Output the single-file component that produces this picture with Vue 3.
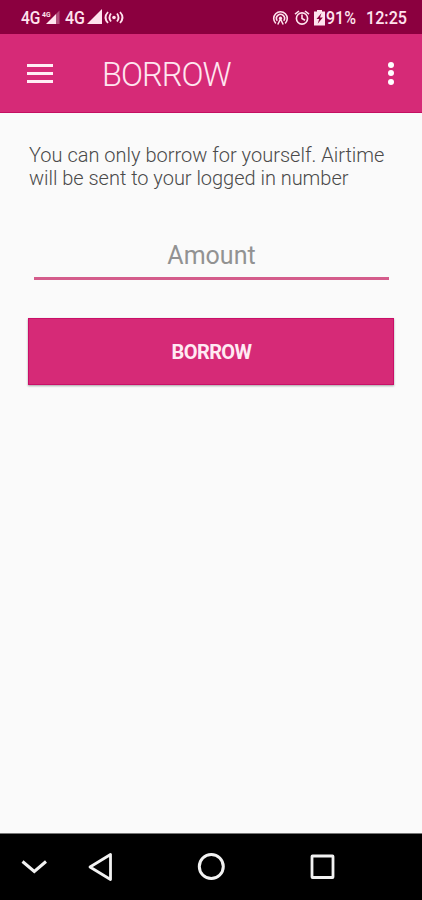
<script setup>
import { ref } from 'vue'

const amount = ref('')
</script>

<template>
  <div class="screen">
    <header class="status">
      <div class="group left">
        <svg width="104" height="34" viewBox="0 0 104 34" fill="#ffe3ee">
          <text x="0" y="24" font-size="18" font-weight="500" textLength="19.500" lengthAdjust="spacingAndGlyphs">4G</text>
          <text x="21" y="16.500" font-size="8" font-weight="700" textLength="8.500" lengthAdjust="spacingAndGlyphs">4G</text>
          <path d="M25 24L35 14V24Z" />
          <path d="M35 14L38.500 10.500V24H35Z" opacity=".35" />
          <text x="44" y="24" font-size="18" font-weight="500" textLength="20" lengthAdjust="spacingAndGlyphs">4G</text>
          <path d="M66 24L81 9V24Z" />
          <circle cx="93" cy="17.500" r="1.800" />
          <g fill="none" stroke="#ffe3ee" stroke-width="1.800">
            <path d="M90 13.500Q87 17.500 90 21.500M96 13.500Q99 17.500 96 21.500M87 12Q82 17.500 87 23M99 12Q104 17.500 99 23" />
          </g>
        </svg>
      </div>
      <div class="group right">
        <svg width="54" height="34" viewBox="0 0 54 34" fill="none" stroke="#ffe3ee" stroke-width="1.600">
          <path d="M4.800 23.400A6.800 6.800 0 1 1 14.200 23.400M6.300 20.800A4 4 0 1 1 12.700 20.800" />
          <path d="M6.800 24.500L9.500 19L12.200 24.500" />
          <circle cx="9.500" cy="18.200" r="1.600" fill="#ffe3ee" stroke="none" />
          <circle cx="31" cy="18.500" r="5.600" />
          <path d="M31 14.500V18.500L34 20.200M24 14.200L28 11M38 14.200L34 11" />
          <path d="M43 11.500H46V10H51V11.500H54V25.500H43Z" fill="#ffe3ee" stroke="none" />
          <path d="M50.500 13L45.500 19H48.200L46.700 23.800L51.800 17.600H49Z" fill="#8b003f" stroke="none" />
        </svg>
        <svg class="battery" width="31" height="34" viewBox="0 0 31 34" fill="#ffe3ee">
          <text x="1" y="24" font-size="17.500" font-weight="500" textLength="30" lengthAdjust="spacingAndGlyphs">91%</text>
        </svg>
        <svg class="clock" width="42" height="34" viewBox="0 0 42 34" fill="#ffe3ee">
          <text x="1" y="24" font-size="18" font-weight="500" textLength="41" lengthAdjust="spacingAndGlyphs">12:25</text>
        </svg>
      </div>
    </header>

    <nav class="appbar">
      <div class="menu"><i></i><i></i><i></i></div>
      <h1>BORROW</h1>
      <div class="more"><i></i><i></i><i></i></div>
    </nav>

    <main>
      <p>You can only borrow for yourself. Airtime<br><span class="second">will be sent to your logged in number</span></p>
      <input v-model="amount" placeholder="Amount">
      <button>BORROW</button>
    </main>

    <footer>
      <svg width="422" height="66" viewBox="0 0 422 66" fill="none" stroke="#f2f2f2" stroke-width="3">
        <path d="M22.500 27.500L34.300 37.500L46 27.500" />
        <path d="M90 33L110.500 20.500V45.500Z" stroke-width="2.800" stroke-linejoin="round" />
        <circle cx="211.300" cy="32.500" r="12" />
        <rect x="312" y="22" width="21" height="21.500" rx=".5" stroke-width="2.800" />
      </svg>
    </footer>
  </div>
</template>

<style>
body {
  margin: 0;
  background: #fafafa;
}
</style>

<style scoped>
.screen {
  width: 422px;
  height: 900px;
  display: flex;
  flex-direction: column;
  background: #fafafa;
  font-family: Roboto, "Liberation Sans", sans-serif;
  overflow: hidden;
}
svg {
  display: block;
  overflow: visible;
}
.status {
  height: 34px;
  box-sizing: border-box;
  padding: 0 15px 0 21px;
  display: flex;
  justify-content: space-between;
  background: #8b003f;
}
.group {
  display: flex;
}
.clock {
  margin-left: 9px;
}
.appbar {
  height: 79px;
  box-sizing: border-box;
  padding: 0 28px 0 27px;
  display: flex;
  align-items: center;
  background: #d62a77;
  border-bottom: 1px solid #c40f62;
}
.menu {
  width: 26px;
  display: flex;
  flex-direction: column;
  gap: 5px;
}
.menu i {
  height: 3px;
  background: #ffeef5;
}
h1 {
  margin: 4px 0 0 49px;
  color: #ffe6f0;
  font-size: 32.500px;
  font-weight: 300;
  line-height: 38px;
  letter-spacing: -0.950px;
}
.more {
  margin-left: auto;
  display: flex;
  flex-direction: column;
  gap: 2.500px;
}
.more i {
  width: 6px;
  height: 6px;
  border-radius: 50%;
  background: #fff;
}
main {
  flex: 1;
  padding: 31px 28px 0;
  display: flex;
  flex-direction: column;
}
p {
  margin: 0 0 0 1px;
  color: #4a4a4a;
  font-size: 20px;
  font-weight: 300;
  line-height: 23px;
  white-space: nowrap;
}
.second {
  letter-spacing: -0.030px;
}
input {
  margin: 44px 5px 0 6px;
  height: 46px;
  box-sizing: border-box;
  padding: 0;
  border: 0;
  border-bottom: 3px solid #d45c8b;
  border-radius: 0;
  outline: 0;
  background: transparent;
  color: #555;
  font: 400 25px/32px Roboto, "Liberation Sans", sans-serif;
  text-align: center;
}
input::placeholder {
  color: #929292;
  opacity: 1;
}
button {
  height: 67px;
  margin: 38px 0 0;
  padding: 1px 0 0 1px;
  border: 1px solid #c90f68;
  border-radius: 0;
  background: #d62a77;
  box-shadow: 0 1px 2px rgba(0, 0, 0, .35);
  color: #ffeaf3;
  font: 700 20px/24px Roboto, "Liberation Sans", sans-serif;
  letter-spacing: -0.600px;
}
footer {
  height: 67px;
  box-sizing: border-box;
  border-top: 1px solid #777;
  background: #000;
}
</style>
